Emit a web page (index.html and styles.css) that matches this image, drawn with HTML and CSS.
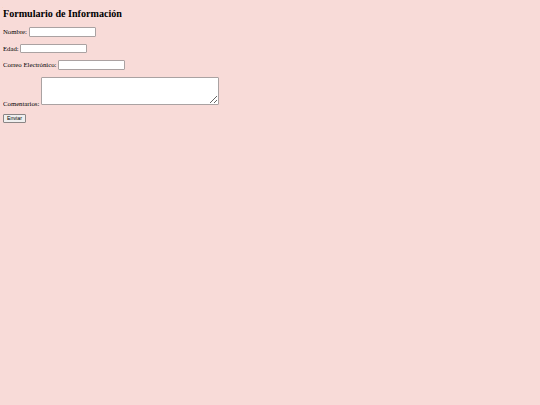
FILE: index.html
```html
<!DOCTYPE html>
<html lang="es">
<head>
<meta charset="utf-8">
<title>Formulario de Información</title>
<link rel="stylesheet" href="styles.css">
</head>
<body>
<h2 class="title">Formulario de Información</h2>
<form class="form">
<p class="row"><label for="nombre">Nombre:</label> <input class="field" type="text" id="nombre"></p>
<p class="row"><label for="edad">Edad:</label> <input class="field" type="text" id="edad"></p>
<p class="row"><label for="correo">Correo Electrónico:</label> <input class="field" type="text" id="correo"></p>
<p class="row"><label for="comentarios">Comentarios:</label> <textarea class="area" id="comentarios"></textarea></p>
<p class="row row-submit"><button class="btn" type="submit">Enviar</button></p>
</form>
</body>
</html>
```
FILE: styles.css
```css
html { background: #f8dbd8; }
body {
  margin: 3px;
  font-family: "Liberation Serif", "Times New Roman", serif;
  font-size: 6.75px;
  color: #000;
}
.title {
  font-size: 10.1px;
  font-weight: bold;
  margin: 5px 0 8px;
}
.form { margin: 0; }
.row { margin: 7px 0; }
.row-submit { margin-top: 8px; }
.field {
  box-sizing: border-box;
  width: 67px;
  height: 9.5px;
  margin: 0;
  padding: 0 1px;
  border: 1px solid #aaa2a2;
  border-radius: 1px;
  background: #fff;
  font-size: 5.3px;
  font-family: "Liberation Sans", Arial, sans-serif;
  vertical-align: baseline;
}
.area {
  box-sizing: border-box;
  width: 178px;
  height: 28.5px;
  margin: 0;
  padding: 1px;
  border: 1px solid #aaa2a2;
  border-radius: 1px;
  background: #fff;
  font-size: 5.3px;
  font-family: "Liberation Mono", monospace;
  vertical-align: baseline;
}
.btn {
  box-sizing: border-box;
  width: 23px;
  height: 9px;
  margin: 0;
  padding: 0;
  border: 1px solid #8a8585;
  border-radius: 1px;
  background: #efefef;
  color: #000;
  font-size: 5.3px;
  line-height: 7px;
  font-family: "Liberation Sans", Arial, sans-serif;
}
```
